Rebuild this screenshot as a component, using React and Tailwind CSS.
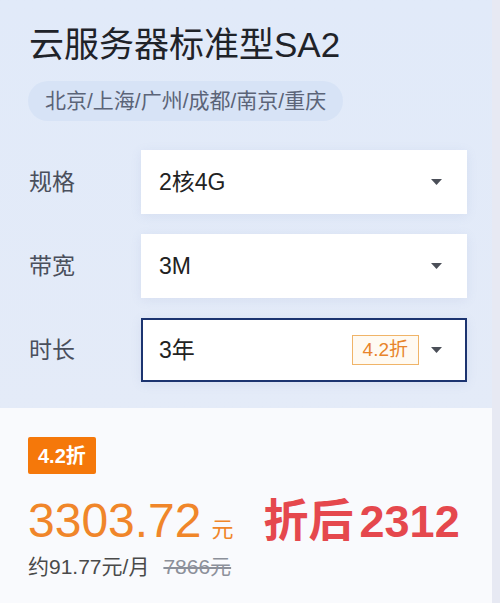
const FONT = { fontFamily: '"Liberation Sans", "Noto Sans CJK SC", sans-serif' };

function Caret() {
  return (
    <svg width="11" height="6" viewBox="0 0 11 6" className="shrink-0">
      <path d="M0 0h11L5.5 6z" fill="#4b4f58" />
    </svg>
  );
}

function SelectRow({ label, value, active = false, badge }) {
  return (
    <div className="flex items-center">
      <div className="w-[141px] shrink-0 pl-[29px] text-[23px] text-[#4a4f5c]">{label}</div>
      <div
        className={
          "flex h-[64px] w-[326px] items-center bg-white shadow-[0_2px_10px_rgba(120,140,190,0.12)] " +
          (active ? "border-2 border-[#1c3470] pl-[16px] pr-[23px]" : "pl-[18px] pr-[25px]")
        }
      >
        <span className="flex-1 text-[23px] text-[#222]">{value}</span>
        {badge && (
          <span className="mr-[12px] flex h-[30px] items-center border border-[#f0b468] bg-[#fffaf2] px-[10px] text-[19px] text-[#e8842a]">
            {badge}
          </span>
        )}
        <Caret />
      </div>
    </div>
  );
}

export default function App() {
  return (
    <div className="flex h-[603px] w-[500px] bg-[#e7e9f3]" style={FONT}>
      <div className="flex w-[492px] flex-col">
        <div className="bg-gradient-to-b from-[#e1eaf9] to-[#e4ebf8] pb-[26px] pt-[24px]">
          <h1 className="pl-[29px] text-[35px] leading-[1.2] text-[#1f2329]">云服务器标准型SA2</h1>
          <div className="ml-[28px] mt-[15px] inline-flex h-[40px] items-center rounded-full bg-[#d7e3f6] px-[17px] text-[21px] text-[#5b6478]">
            北京/上海/广州/成都/南京/重庆
          </div>
          <div className="mt-[29px] flex flex-col gap-[20px]">
            <SelectRow label="规格" value="2核4G" />
            <SelectRow label="带宽" value="3M" />
            <SelectRow label="时长" value="3年" active badge="4.2折" />
          </div>
        </div>
        <div className="flex-1 bg-[#f9fafd] pl-[28px] pt-[29px]">
          <div className="inline-flex h-[37px] items-center rounded-[2px] bg-[#f5780a] px-[10px] text-[20px] font-semibold text-white">
            4.2折
          </div>
          <div className="mt-[23px] flex items-baseline leading-none">
            <span className="text-[48px] text-[#f0862a]">3303.72</span>
            <span className="ml-[10px] text-[22px] text-[#f0862a]">元</span>
            <span className="ml-[30px] text-[45px] font-bold text-[#e5484d]">折后</span>
            <span className="ml-[6px] text-[45px] font-bold text-[#e5484d]">2312</span>
          </div>
          <div className="mt-[8px] flex items-center text-[21px] leading-[28px]">
            <span className="text-[#4a4a4a]">约91.77元/月</span>
            <span className="ml-[14px] text-[#8c909a] line-through">7866元</span>
          </div>
        </div>
      </div>
    </div>
  );
}
